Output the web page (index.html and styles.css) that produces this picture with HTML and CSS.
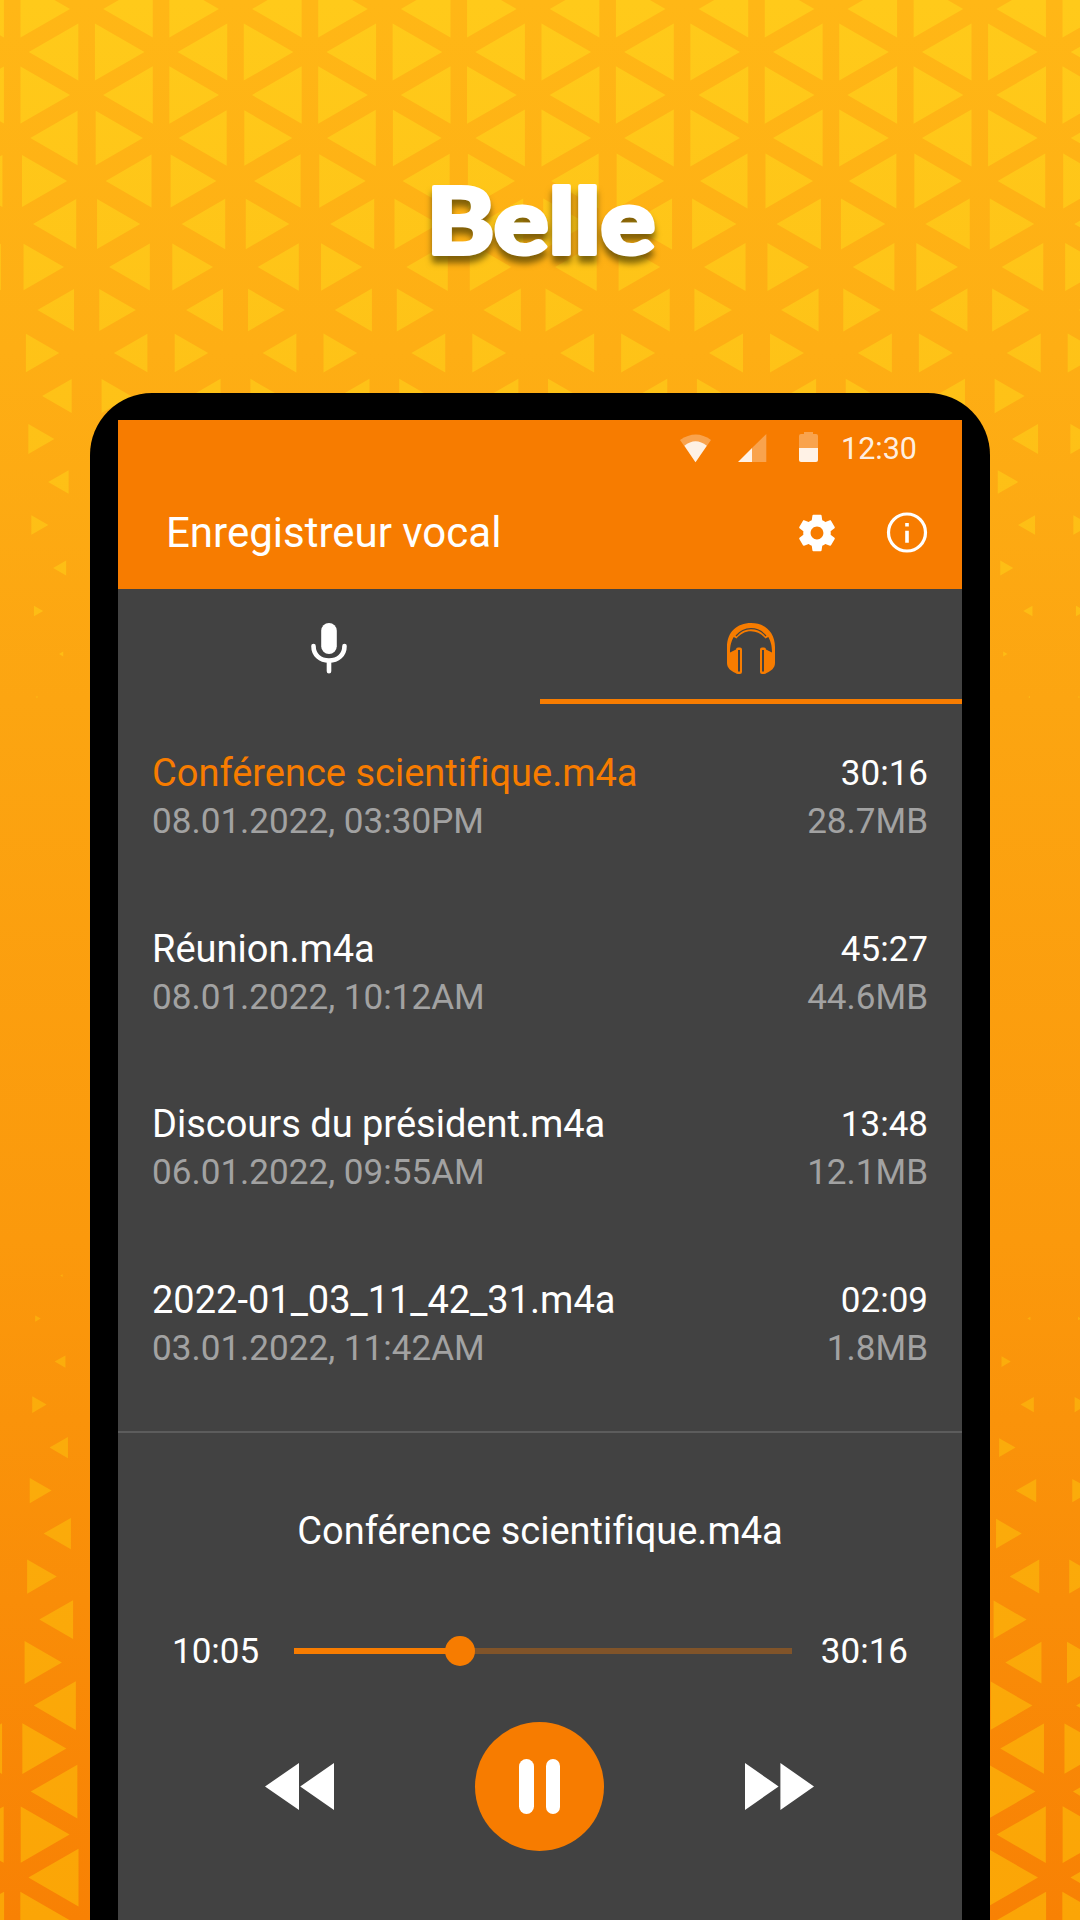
FILE: index.html
```html
<!DOCTYPE html>
<html lang="fr">
<head>
<meta charset="utf-8">
<title>Enregistreur vocal</title>
<link rel="stylesheet" href="styles.css">
</head>
<body>
<svg class="backdrop" viewBox="0 0 1080 1920" aria-hidden="true">
  <defs>
    <linearGradient id="tri" x1="0" y1="0" x2="0" y2="1920" gradientUnits="userSpaceOnUse">
      <stop offset="0" stop-color="#ffca1a"/>
      <stop offset=".2" stop-color="#fec217"/>
      <stop offset=".7" stop-color="#fbad0c"/>
      <stop offset="1" stop-color="#fba506"/>
    </linearGradient>
  </defs>
  <path id="triangles" fill="url(#tri)"/>
</svg>
<main class="promo">
  <svg class="headline" viewBox="0 0 300 130" role="img" aria-label="Belle">
    <text class="headline-text" x="151" y="100" text-anchor="middle" textLength="229" lengthAdjust="spacingAndGlyphs">Belle</text>
  </svg>
  <section class="phone">
    <div class="screen">
      <header class="header">
        <div class="status">
          <svg width="32" height="30" viewBox="0 0 32 30"><path fill="#fff" fill-opacity=".3" d="M0 6Q16-5 31 6L15.500 28Z"/><path fill="#fff" fill-opacity=".85" d="M4.400 11.800Q15.500 2.800 26.800 11.800L15.500 28.200Z"/></svg>
          <svg class="signal" width="29" height="30" viewBox="0 0 29 30"><path fill="#fff" fill-opacity=".3" d="M28.300 0V28H14V14Z"/><path fill="#fff" fill-opacity=".9" d="M14 14V28H0Z"/></svg>
          <svg class="battery" width="19" height="30" viewBox="0 0 19 30"><path fill="#fff" fill-opacity=".3" d="M0 16V4Q0 2 2 2H5V0H14V2H17Q19 2 19 4V16Z"/><path fill="#fff" fill-opacity=".9" d="M0 16H19V28Q19 30 17 30H2Q0 30 0 28Z"/></svg>
          <span class="clock">12:30</span>
        </div>
        <div class="appbar">
          <h1>Enregistreur vocal</h1>
          <svg class="gear" width="44" height="44" viewBox="0 0 24 24"><path fill="#fff" d="M19.430 12.980c.04-.32.07-.64.07-.98s-.03-.66-.07-.98l2.110-1.650c.19-.15.24-.42.12-.64l-2-3.460c-.12-.22-.39-.3-.61-.22l-2.490 1c-.52-.4-1.080-.73-1.690-.98l-.38-2.650C14.460 2.180 14.250 2 14 2h-4c-.25 0-.46.18-.49.42l-.38 2.650c-.61.25-1.170.59-1.690.98l-2.490-1c-.23-.09-.49 0-.61.22l-2 3.460c-.13.22-.07.49.12.64l2.110 1.650c-.04.32-.07.65-.07.98s.03.66.07.98l-2.110 1.650c-.19.15-.24.42-.12.64l2 3.460c.12.22.39.3.61.22l2.490-1c.52.4 1.080.73 1.690.98l.38 2.650c.03.24.24.42.49.42h4c.25 0 .46-.18.49-.42l.38-2.650c.61-.25 1.170-.59 1.690-.98l2.490 1c.23.09.49 0 .61-.22l2-3.460c.12-.22.07-.49-.12-.64l-2.110-1.650zM12 15.500c-1.930 0-3.500-1.570-3.500-3.500s1.570-3.500 3.500-3.500 3.500 1.570 3.500 3.500-1.570 3.500-3.500 3.500z"/></svg>
          <svg width="42" height="42" viewBox="0 0 42 42"><circle cx="21" cy="20.500" r="18.500" fill="none" stroke="#fff" stroke-width="3.200"/><path fill="#fff" d="M19.200 11h3.600v3.600h-3.600zM19.200 18.700h3.600v12h-3.600z"/></svg>
        </div>
      </header>
      <nav class="tabs">
        <div class="tab"><svg width="36" height="51" viewBox="0 0 36 51"><rect x="10.200" y="0" width="15.600" height="31" rx="7.800" fill="#fff"/><path fill="none" stroke="#fff" stroke-width="4.600" stroke-linecap="round" d="M2.500 23C2.500 32 9 37.600 18 37.600S33.500 32 33.500 23M18 38.500V48.300"/></svg></div>
        <div class="tab active"><svg width="48" height="51" viewBox="0 0 48 51"><path fill="#f77c00" fill-rule="evenodd" d="M0 24C0 9 10 0 24 0S48 9 48 24V40C48 45 44 48 39.500 50Q38.500 51 37 51H35Q33 51 33 49V26.500Q33 24.500 35 24.500H37Q39 24.500 39 26.500L45 29.500C45 22 43.500 18 41.300 14L38.500 15.500C34.500 11 30 8.300 24 8.300S13.500 11 9.500 15.500L6.700 14C4.500 18 3 22 3 29.500L9 26.500Q9 24.500 11 24.500H13Q15 24.500 15 26.500V49Q15 51 13 51H11Q9.500 51 8.500 50C4 48 0 45 0 40ZM11 27V48.500H13V27ZM35 27V48.500H37V27Z"/><path fill="none" stroke="#424242" stroke-width="1.200" d="M9 13Q15 5.600 24 5.600T39 13"/></svg></div>
      </nav>
      <ul class="list">
        <li class="current"><div><p class="name">Conférence scientifique.m4a</p><p class="meta">08.01.2022, 03:30PM</p></div><div class="right"><p class="time">30:16</p><p class="meta">28.7MB</p></div></li>
        <li><div><p class="name">Réunion.m4a</p><p class="meta">08.01.2022, 10:12AM</p></div><div class="right"><p class="time">45:27</p><p class="meta">44.6MB</p></div></li>
        <li><div><p class="name">Discours du président.m4a</p><p class="meta">06.01.2022, 09:55AM</p></div><div class="right"><p class="time">13:48</p><p class="meta">12.1MB</p></div></li>
        <li><div><p class="name">2022-01_03_11_42_31.m4a</p><p class="meta">03.01.2022, 11:42AM</p></div><div class="right"><p class="time">02:09</p><p class="meta">1.8MB</p></div></li>
      </ul>
      <section class="player">
        <p class="track-name">Conférence scientifique.m4a</p>
        <div class="seek">
          <span class="time">10:05</span>
          <div class="bar"><div class="fill" style="width:33%"></div><div class="thumb"></div></div>
          <span class="time">30:16</span>
        </div>
        <div class="controls">
          <svg width="70" height="47" viewBox="0 0 70 47"><path fill="#fff" d="M0 23.500L34 0V47ZM35.200 23.500L69 0V47Z"/></svg>
          <div class="pause"><i></i><i></i></div>
          <svg width="70" height="47" viewBox="0 0 70 47"><path fill="#fff" d="M1 0L34.600 23.500L1 47ZM36.400 0L70 23.500L36.400 47Z"/></svg>
        </div>
      </section>
    </div>
  </section>
</main>
<script src="pattern.js"></script>
</body>
</html>
```
FILE: styles.css
```css
* { box-sizing: border-box; margin: 0; padding: 0; }
body {
  width: 1080px;
  height: 1920px;
  overflow: hidden;
  font-family: Roboto, "Liberation Sans", sans-serif;
  font-variant-ligatures: none;
  color: #fff;
  background: linear-gradient(#ffb716 0, #feae14 350px, #fca511 700px, #fb990c 1240px, #f98d08 1600px, #f88104 1920px);
}
svg { display: block; flex: none; }
.backdrop { position: absolute; left: 0; top: 0; width: 1080px; height: 1920px; }
.promo {
  position: relative;
  height: 1920px;
  display: flex;
  flex-direction: column;
  align-items: center;
  padding-top: 154px;
  overflow: hidden;
}
.headline { width: 300px; height: 130px; margin-bottom: 109px; overflow: visible; }
.headline-text {
  font: 900 91px Lato, sans-serif;
  fill: #fff;
  stroke: #fff;
  stroke-width: 4px;
  stroke-linejoin: round;
  filter: drop-shadow(0 7px 3px rgba(60, 50, 0, .65));
}
.phone {
  width: 900px;
  flex: none;
  height: 1600px;
  padding: 27px 28px 0 28px;
  border-radius: 62px 62px 0 0;
  background: #000;
}
.screen { height: 1573px; background: #424242; }
.header { height: 169px; background: #f77c00; }
.status {
  height: 57px;
  display: flex;
  align-items: center;
  justify-content: flex-end;
  padding-right: 45px;
}
.signal { margin-left: 26px; }
.battery { margin: 0 23px 3px 32px; }
.clock { font-size: 30.500px; color: rgba(255, 255, 255, .9); }
.appbar {
  height: 112px;
  display: flex;
  align-items: center;
  padding: 0 34px 1px 48px;
}
h1 { flex: 1; font-size: 42px; font-weight: 400; }
.gear { margin-right: 47px; }
.tabs { display: flex; height: 115px; }
.tab {
  flex: 1;
  display: flex;
  justify-content: center;
  align-items: flex-start;
  padding-top: 34px;
}
.active { border-bottom: 5px solid #f77c00; }
.list { list-style: none; height: 729px; padding: 46px 34px 0; border-bottom: 2px solid #5c5c5c; }
.list li { display: flex; justify-content: space-between; height: 175.500px; }
.name, .time { font-size: 38px; line-height: 47px; }
.current .name { color: #f77c00; }
.meta { font-size: 35.100px; line-height: 48px; color: #a2a2a2; }
.right { text-align: right; }
.right .time, .seek .time { font-size: 35px; }
.track-name { margin-top: 74px; text-align: center; font-size: 38px; line-height: 48px; }
.seek {
  display: flex;
  align-items: center;
  justify-content: space-between;
  height: 48px;
  margin-top: 72px;
  padding: 0 54px;
}
.bar { position: relative; left: 3px; width: 498px; height: 6.500px; background: #815429; }
.fill { height: 100%; background: #f77c00; }
.thumb {
  position: absolute;
  left: 151px;
  top: -11.750px;
  width: 30px;
  height: 30px;
  border-radius: 50%;
  background: #f77c00;
}
.controls {
  display: flex;
  align-items: center;
  justify-content: space-between;
  margin-top: 47px;
  padding: 0 148px 0 147px;
}
.pause {
  width: 129px;
  height: 129px;
  border-radius: 50%;
  background: #f77c00;
  display: flex;
  align-items: center;
  justify-content: center;
  gap: 12px;
}
.pause i { width: 14.500px; height: 55px; border-radius: 8px; background: #fff; }
```
FILE: pattern.js
```js
// Half-heights of the triangles, one [left, right] pair for each row.
const upperRows = [[28.6, 28.6], [28.6, 28.6], [28.6, 28.7], [27, 28.6], [26, 27.4], [24.8, 25.6],
  [23.3, 24], [21, 21.6], [19.2, 19.6], [17, 17.3], [15, 15], [11.8, 11.8], [9.8, 9.8],
  [7.5, 7.5], [5.3, 5.3], [2.4, 2.4], [1, 1]];
const lowerRows = [[1.5, 0], [3.2, 1.7], [6.3, 5.2], [8.3, 7.6], [10.7, 9.3], [12.6, 11.7],
  [15.8, 14.7], [17.1, 17], [19.5, 19], [21.5, 20.8], [24.3, 24], [25.4, 25.2], [26.9, 26.7],
  [28.2, 28.4], [28.9, 28.9], [28.9, 28.9]];

const COLUMN = 74.43;
const ROW = 43;

// Each row has triangle pairs that point away from every second column line.
function rowPath(y, parity, [left, right]) {
  let d = '';
  for (let k = -2; k <= 16; k++) {
    if (Math.abs(k % 2) !== parity) continue;
    const line = 12.2 + k * COLUMN;
    const t = Math.min(1, Math.max(0, line / 1080 * (y < 900 ? 2 : 1)));
    const h = left + (right - left) * t;
    if (h < 0.5) continue;
    const len = h * Math.sqrt(3);
    const gap = COLUMN / 3 - len / 3;
    for (const s of [-1, 1]) {
      const base = line + s * gap;
      d += `M${base} ${y - h}V${y + h}L${base + s * len} ${y}Z`;
    }
  }
  return d;
}

let path = rowPath(-34, 1, [28.6, 28.6]);
upperRows.forEach((h, i) => { path += rowPath(9 + i * ROW, i % 2, h); });
lowerRows.forEach((h, i) => { path += rowPath(1275.6 + i * ROW, (i + 1) % 2, h); });
document.getElementById('triangles').setAttribute('d', path);
```
